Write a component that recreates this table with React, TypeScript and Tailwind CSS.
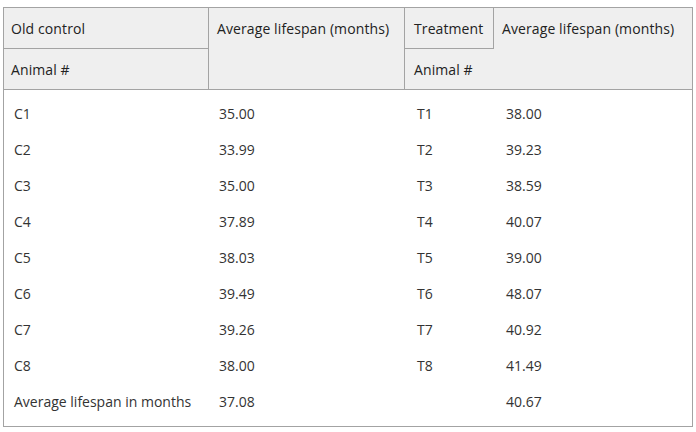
const rows = [
  ["C1", "35.00", "T1", "38.00"],
  ["C2", "33.99", "T2", "39.23"],
  ["C3", "35.00", "T3", "38.59"],
  ["C4", "37.89", "T4", "40.07"],
  ["C5", "38.03", "T5", "39.00"],
  ["C6", "39.49", "T6", "48.07"],
  ["C7", "39.26", "T7", "40.92"],
  ["C8", "38.00", "T8", "41.49"],
  ["Average lifespan in months", "37.08", "", "40.67"],
];

export default function App() {
  return (
    <div
      className="w-[696px] h-[432px] bg-white pt-[7px] pl-[3px] text-[14px] text-[#333]"
      style={{ fontFamily: '"Open Sans", "Liberation Sans", sans-serif' }}
    >
      <div className="w-[690px] border border-[#a3a3a3]">
        {/* header */}
        <div className="grid grid-cols-[205px_196px_89px_198px] grid-rows-[41px_40px] bg-[#efefef] border-b border-[#a3a3a3] text-[#222] tracking-[0.1px]">
          <div className="col-start-1 row-start-1 flex items-center pl-[7px] border-r border-b border-[#a3a3a3]">
            Old control
          </div>
          <div className="col-start-1 row-start-2 flex items-center pl-[7px] border-r border-[#a3a3a3]">
            Animal #
          </div>
          <div className="col-start-2 row-start-1 row-span-2 border-r border-[#a3a3a3]">
            <div className="h-[40px] flex items-center pl-2">Average lifespan (months)</div>
          </div>
          <div className="col-start-3 row-start-1 flex items-center pl-[9px] border-r border-b border-[#a3a3a3]">
            Treatment
          </div>
          <div className="col-start-3 row-start-2 flex items-center pl-[9px]">Animal #</div>
          <div className="col-start-4 row-start-1 row-span-2">
            <div className="h-[40px] flex items-center pl-2">Average lifespan (months)</div>
          </div>
        </div>

        {/* body */}
        <div className="pt-[5px] pb-[7px]">
          {rows.map((r, i) => (
            <div key={i} className="grid grid-cols-[205px_196px_89px_198px] h-[36px] items-center">
              <div className="pl-[10px]">{r[0]}</div>
              <div className="pl-[10px]">{r[1]}</div>
              <div className="pl-[12px]">{r[2]}</div>
              <div className="pl-[12px]">{r[3]}</div>
            </div>
          ))}
        </div>
      </div>
    </div>
  );
}
